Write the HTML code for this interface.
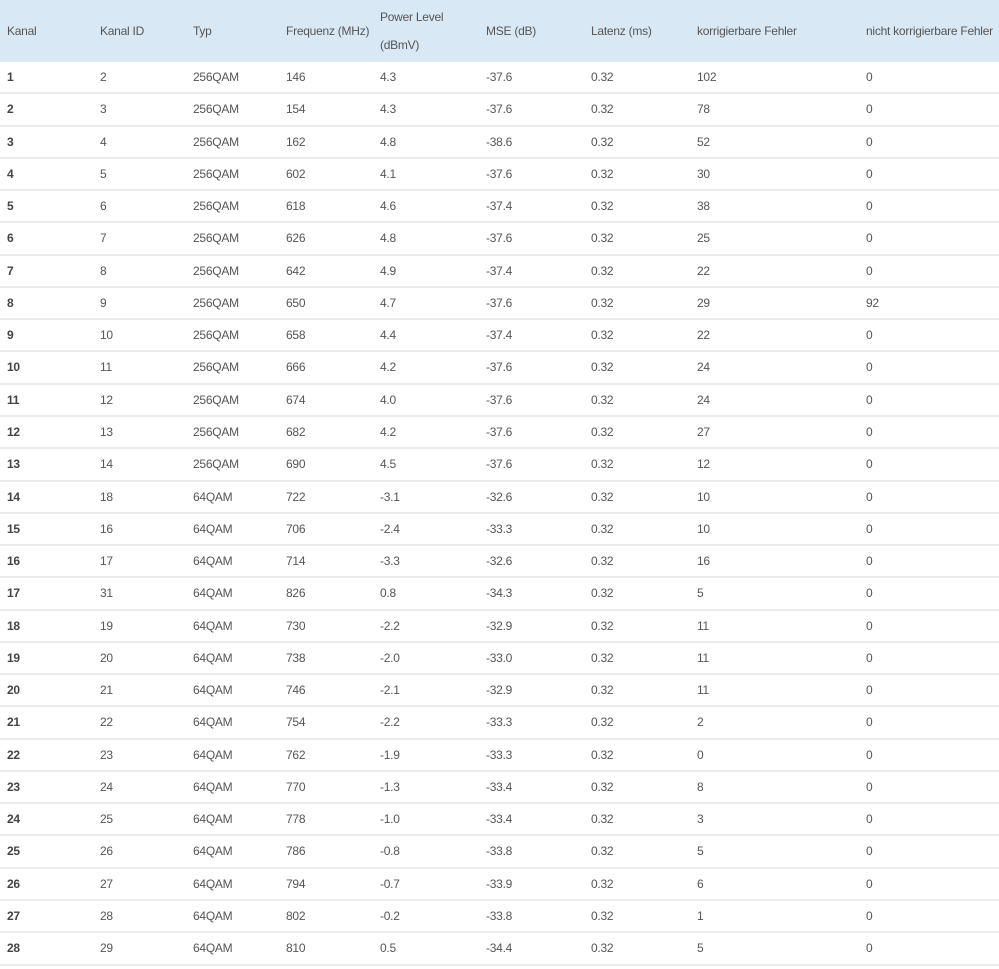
<!DOCTYPE html>
<html><head><meta charset="utf-8"><style>
body{margin:0;width:999px;height:969px;background:#fff;font-family:"Liberation Sans",sans-serif;font-size:12px;letter-spacing:-0.25px;color:#555;overflow:hidden;position:relative}
.h{position:absolute;left:0;top:0;width:999px;height:62px;background:#d9e8f5}
.r{position:absolute;left:0;width:999px;height:32.27px;box-sizing:border-box;border-bottom:2px solid #ebebeb}
.c{position:absolute;top:0;line-height:30px;white-space:nowrap}
.h .c{line-height:62px}
.b{font-weight:bold;color:#444}
</style></head><body>
<div class="h">
<div class="c" style="left:7px">Kanal</div>
<div class="c" style="left:100px">Kanal ID</div>
<div class="c" style="left:193px">Typ</div>
<div class="c" style="left:286px">Frequenz (MHz)</div>
<div class="c" style="left:380px;line-height:28px;top:3px">Power Level<br>(dBmV)</div>
<div class="c" style="left:486px">MSE (dB)</div>
<div class="c" style="left:591px">Latenz (ms)</div>
<div class="c" style="left:697px">korrigierbare Fehler</div>
<div class="c" style="left:866px">nicht korrigierbare Fehler</div>
</div>
<div id="t"></div>
<script>
var d=[[1,2,"256QAM",146,"4.3","-37.6",102,0],[2,3,"256QAM",154,"4.3","-37.6",78,0],[3,4,"256QAM",162,"4.8","-38.6",52,0],[4,5,"256QAM",602,"4.1","-37.6",30,0],[5,6,"256QAM",618,"4.6","-37.4",38,0],[6,7,"256QAM",626,"4.8","-37.6",25,0],[7,8,"256QAM",642,"4.9","-37.4",22,0],[8,9,"256QAM",650,"4.7","-37.6",29,92],[9,10,"256QAM",658,"4.4","-37.4",22,0],[10,11,"256QAM",666,"4.2","-37.6",24,0],[11,12,"256QAM",674,"4.0","-37.6",24,0],[12,13,"256QAM",682,"4.2","-37.6",27,0],[13,14,"256QAM",690,"4.5","-37.6",12,0],[14,18,"64QAM",722,"-3.1","-32.6",10,0],[15,16,"64QAM",706,"-2.4","-33.3",10,0],[16,17,"64QAM",714,"-3.3","-32.6",16,0],[17,31,"64QAM",826,"0.8","-34.3",5,0],[18,19,"64QAM",730,"-2.2","-32.9",11,0],[19,20,"64QAM",738,"-2.0","-33.0",11,0],[20,21,"64QAM",746,"-2.1","-32.9",11,0],[21,22,"64QAM",754,"-2.2","-33.3",2,0],[22,23,"64QAM",762,"-1.9","-33.3",0,0],[23,24,"64QAM",770,"-1.3","-33.4",8,0],[24,25,"64QAM",778,"-1.0","-33.4",3,0],[25,26,"64QAM",786,"-0.8","-33.8",5,0],[26,27,"64QAM",794,"-0.7","-33.9",6,0],[27,28,"64QAM",802,"-0.2","-33.8",1,0],[28,29,"64QAM",810,"0.5","-34.4",5,0]];
var x=[7,100,193,286,380,486,591,697,866],h="";
d.forEach(function(r,i){var v=[r[0],r[1],r[2],r[3],r[4],r[5],"0.32",r[6],r[7]];h+='<div class="r" style="top:'+(62+i*32.27)+'px">';v.forEach(function(s,j){h+='<div class="c'+(j?'':' b')+'" style="left:'+x[j]+'px">'+s+'</div>'});h+='</div>'});
document.getElementById("t").innerHTML=h;
</script>
</body></html>
